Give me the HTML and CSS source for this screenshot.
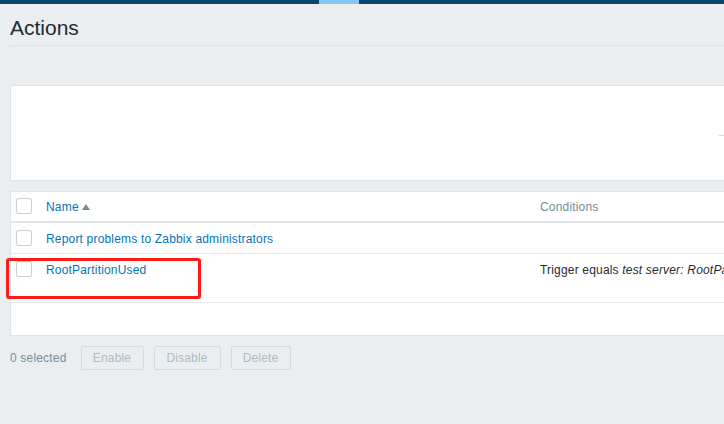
FILE: index.html
```html
<!DOCTYPE html>
<html>
<head>
<meta charset="utf-8">
<link rel="stylesheet" href="styles.css">
</head>
<body>
<div class="topbar"><span class="topbar-active"></span></div>
<div class="page">
  <header class="page-header"><h1>Actions</h1></header>
  <div class="filter"><span class="filter-btn"></span></div>
  <div class="table-box">
    <table class="list">
      <thead>
        <tr>
          <th class="col-check"><span class="checkbox"></span></th>
          <th class="col-name"><a class="link">Name</a><span class="sort-up"></span></th>
          <th class="col-cond">Conditions</th>
        </tr>
      </thead>
      <tbody>
        <tr class="row">
          <td class="col-check"><span class="checkbox"></span></td>
          <td><a class="link">Report problems to Zabbix administrators</a></td>
          <td></td>
        </tr>
        <tr class="row tall">
          <td class="col-check"><span class="checkbox"></span></td>
          <td><a class="link">RootPartitionUsed</a></td>
          <td class="cond">Trigger equals <em>test server: RootPartitionUsed</em></td>
        </tr>
      </tbody>
    </table>
    <div class="table-foot"></div>
    <div class="highlight"></div>
  </div>
  <div class="actions">
    <span class="selected">0 selected</span>
    <button class="btn btn-enable" disabled>Enable</button>
    <button class="btn btn-disable" disabled>Disable</button>
    <button class="btn btn-delete" disabled>Delete</button>
  </div>
</div>
</body>
</html>
```
FILE: styles.css
```css
html, body {
  margin: 0;
  padding: 0;
  background: #ebeef0;
  overflow: hidden;
  font-family: "Liberation Sans", Arial, sans-serif;
  font-size: 12px;
  letter-spacing: 0.18px;
  color: #1f2c33;
}
.topbar {
  height: 4px;
  background: #0a466a;
  display: flex;
}
.topbar-active {
  display: block;
  margin-left: 319px;
  width: 40px;
  height: 4px;
  background: #84c7f3;
}
.page {
  padding-left: 10px;
  width: 1000px;
}
.page-header {
  height: 41px;
  border-bottom: 1px solid #dde2e6;
}
.page-header h1 {
  margin: 0;
  padding-top: 12px;
  font-weight: normal;
  font-size: 21px;
  line-height: 24px;
  letter-spacing: 0;
  color: #1f2c33;
}
.filter {
  margin-top: 39px;
  height: 94px;
  background: #fff;
  border: 1px solid #dfe4e7;
  display: flex;
  align-items: flex-start;
}
.filter-btn {
  display: block;
  margin-top: 49px;
  margin-left: 708px;
  width: 12px;
  height: 1px;
  background: #d3d9dd;
}
.table-box {
  position: relative;
  margin-top: 10px;
  background: #fff;
  border: 1px solid #dfe4e7;
}
.list {
  border-collapse: collapse;
  width: 100%;
}
.list th, .list td {
  padding: 0;
  text-align: left;
  vertical-align: top;
  font-weight: normal;
  white-space: nowrap;
}
.list thead tr {
  height: 30px;
  border-bottom: 2px solid #dfe4e7;
}
.list th {
  padding-top: 8px;
  color: #768d99;
}
.col-check {
  width: 30px;
  padding-left: 5px !important;
}
.col-name {
  width: 494px;
}
.checkbox {
  display: block;
  width: 14px;
  height: 14px;
  border: 1px solid #c9d2d8;
  border-radius: 2px;
  background: #fff;
  margin-top: -2px;
}
.row {
  height: 31px;
  border-bottom: 1px solid #e6eaed;
}
.row td {
  padding-top: 9px;
}
.row.tall {
  height: 49px;
}
.link {
  color: #0275b8;
  text-decoration: none;
}
.sort-up {
  display: inline-block;
  margin-left: 3px;
  width: 0;
  height: 0;
  border-left: 4px solid transparent;
  border-right: 4px solid transparent;
  border-bottom: 6px solid #768d99;
  vertical-align: 1px;
}
.cond em {
  font-style: italic;
}
.table-foot {
  height: 32px;
}
.highlight {
  position: absolute;
  left: -5px;
  top: 66px;
  width: 189px;
  height: 35px;
  border: 3px solid #ff1a1a;
  border-radius: 3px;
}
.actions {
  display: flex;
  align-items: center;
  margin-top: 10px;
  height: 24px;
}
.selected {
  color: #768d99;
  margin-right: 14px;
}
.btn {
  height: 24px;
  margin-right: 10px;
  padding: 0;
  font-family: inherit;
  font-size: 12px;
  letter-spacing: 0.18px;
  color: #acbbc2;
  background: #ebeef0;
  border: 1px solid #d5dcdf;
  border-radius: 2px;
}
.btn-enable { width: 63px; }
.btn-disable { width: 67px; }
.btn-delete { width: 60px; }
```
